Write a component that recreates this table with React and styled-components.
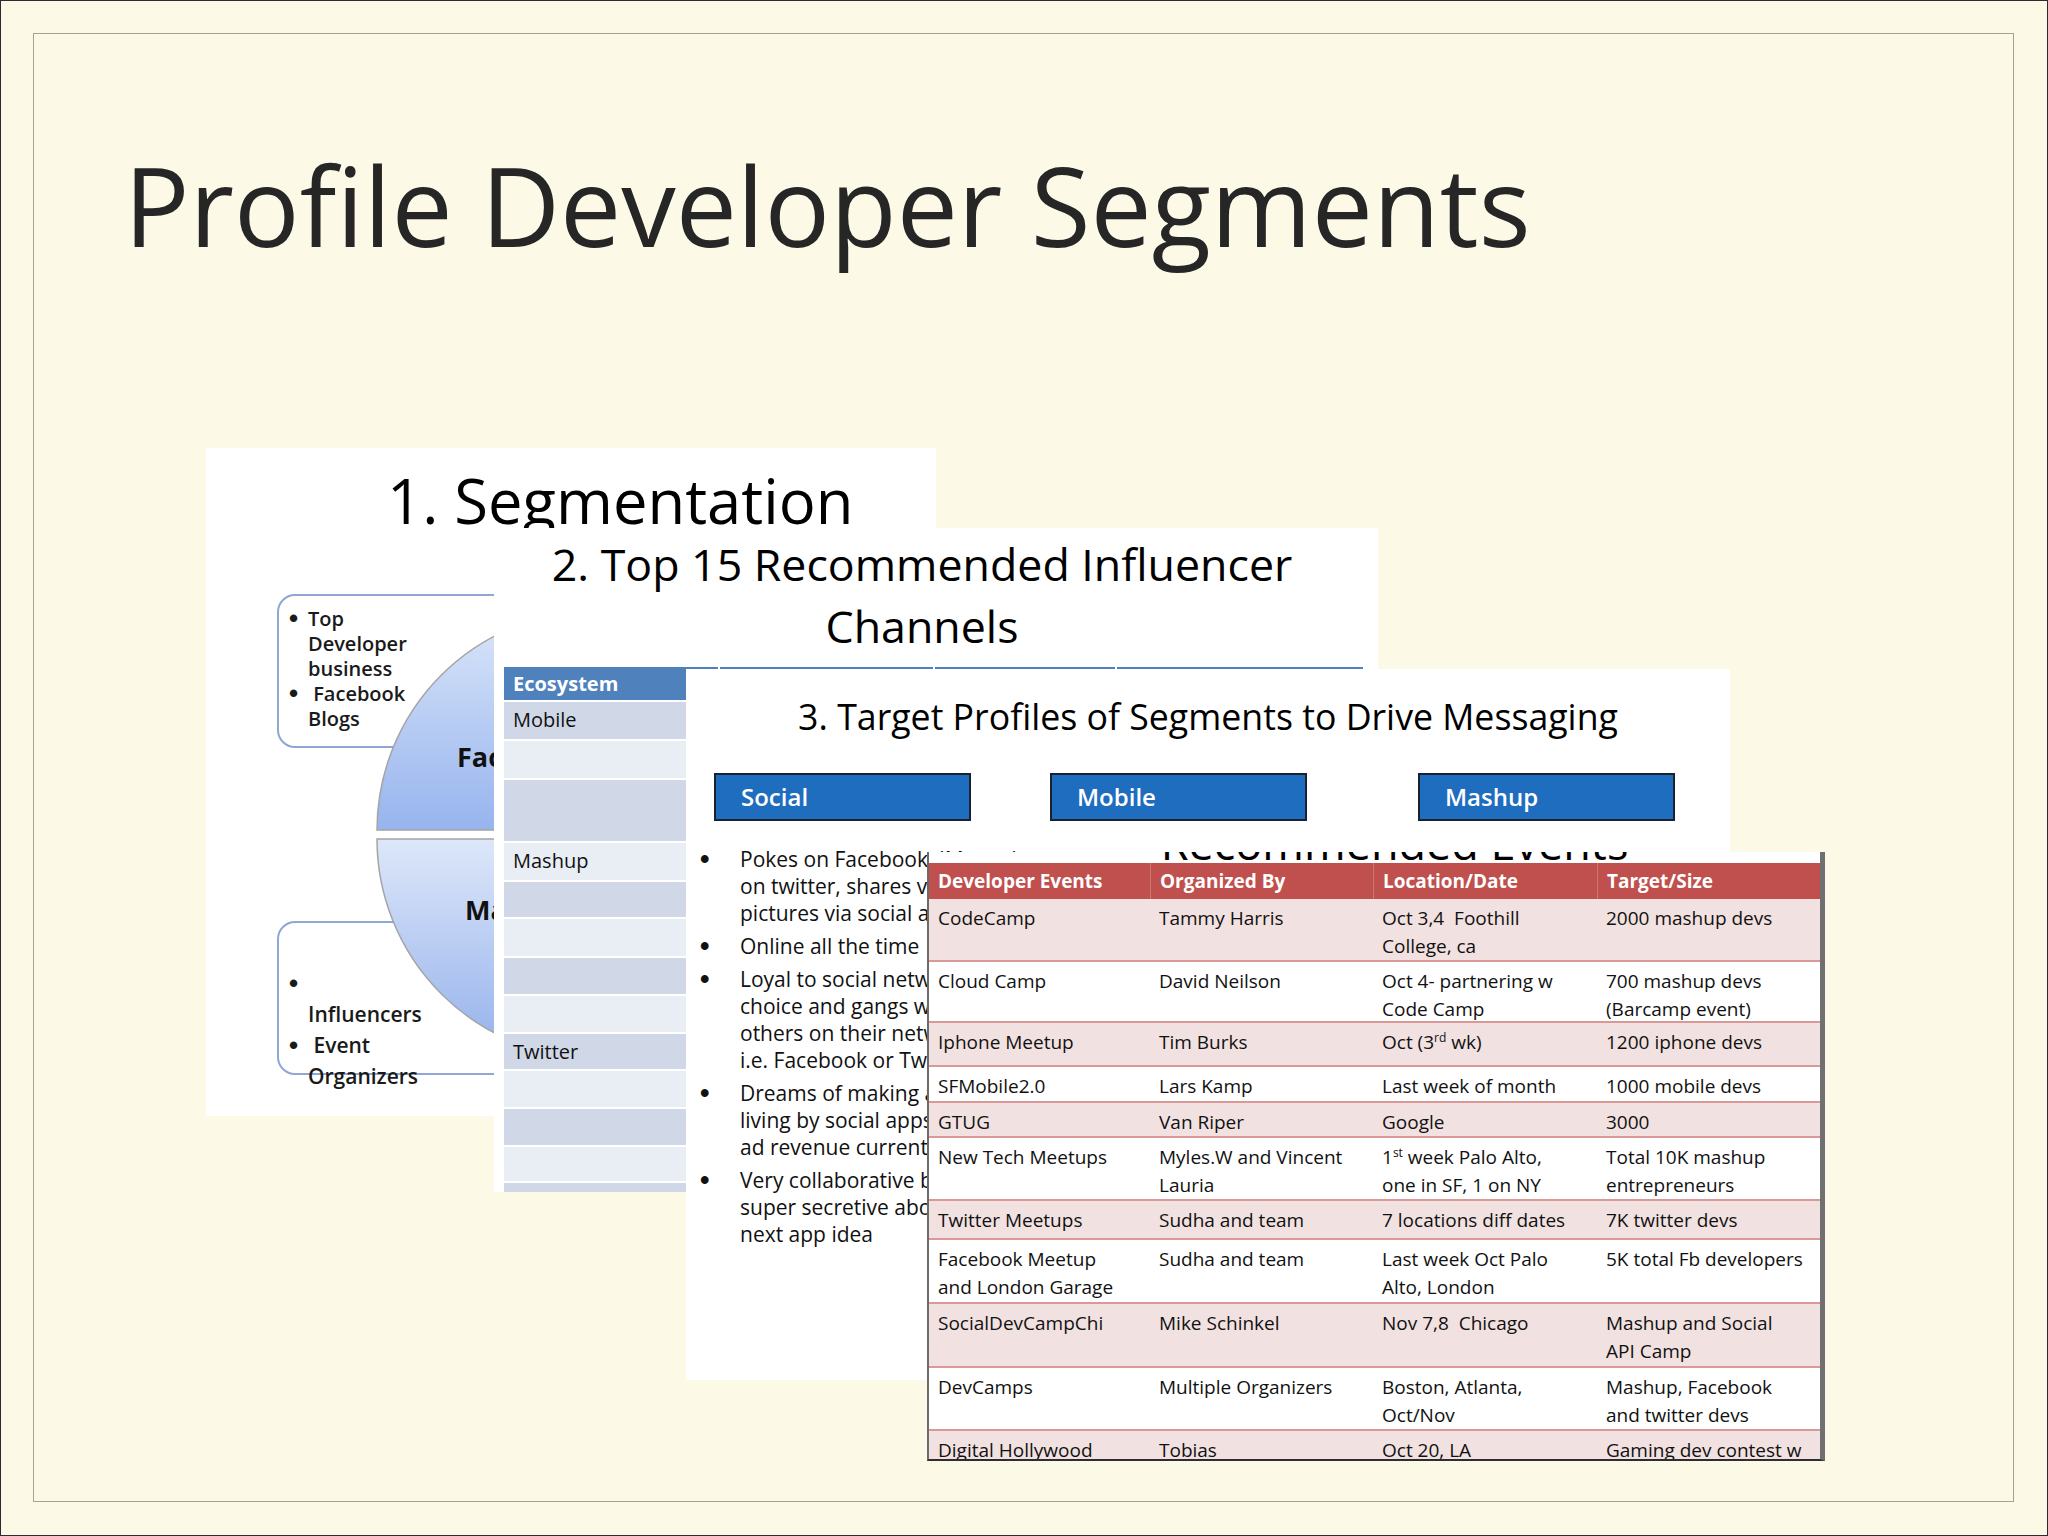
import React from "react";
import styled, { createGlobalStyle } from "styled-components";

const GlobalStyle = createGlobalStyle`
  html, body {
    margin: 0;
    padding: 0;
    background: #fdf9e7;
  }
  body {
    font-family: "Open Sans", "Liberation Sans", sans-serif;
    color: #111;
  }
`;

const Page = styled.div`
  width: 2048px;
  height: 1536px;
  box-sizing: border-box;
  border: 1px solid #2b2b2b;
  background: #fdf9e7;
  padding: 32px 33px 33px 32px;
  overflow: hidden;
`;

const Frame = styled.div`
  height: 100%;
  box-sizing: border-box;
  border: 1px solid #a6a28d;
  display: flex;
  flex-direction: column;
`;

const Title = styled.h1`
  margin: 0;
  padding: 106px 0 0 90px;
  font-family: "Open Sans", sans-serif;
  font-weight: 400;
  font-size: 109px;
  line-height: 130px;
  color: #262626;
  white-space: nowrap;
`;

const Collage = styled.div`
  position: relative;
  flex: 1;
`;

const Shot = styled.div`
  position: absolute;
  left: ${(p) => p.$x}px;
  top: ${(p) => p.$y}px;
  width: ${(p) => p.$w}px;
  height: ${(p) => p.$h}px;
  box-sizing: border-box;
  background: #fff;
  overflow: hidden;
`;

/* ---------- 1. Segmentation ---------- */

const SegTitle = styled.div`
  margin-top: 16px;
  padding-left: 181px;
  font-size: 61.5px;
  line-height: 73px;
  color: #000;
  white-space: nowrap;
`;

const RoundBox = styled.div`
  position: absolute;
  left: 71px;
  top: ${(p) => p.$top}px;
  width: 560px;
  height: 154px;
  box-sizing: border-box;
  border: 2px solid #8da8d4;
  border-radius: 18px;
  padding-top: ${(p) => p.$pad}px;
  font-weight: 600;
  font-size: ${(p) => p.$size}px;
  line-height: ${(p) => p.$lh}px;
  color: #1a1a1a;
`;

const BoxItem = styled.div`
  display: flex;
  padding-left: 10px;
  white-space: nowrap;
`;

const BoxDot = styled.span`
  width: 19px;
  flex: none;
  font-family: "Liberation Sans", sans-serif;
  font-weight: 700;
  font-size: 26px;
`;

const Pie = styled.svg`
  position: absolute;
  left: 160px;
  top: 157px;
  overflow: visible;
`;

const PieLabel = styled.span`
  position: absolute;
  left: ${(p) => p.$x}px;
  top: ${(p) => p.$y}px;
  font-weight: 700;
  font-size: 27px;
  line-height: 34px;
  color: #111;
  white-space: nowrap;
`;

/* ---------- 2. Influencer channels ---------- */

const ChanTitle = styled.div`
  padding: 5px 28px 0 0;
  text-align: center;
  font-size: 44.7px;
  line-height: 62px;
  color: #000;
  white-space: nowrap;
`;

const ChanTable = styled.div`
  margin: 10px 0 0 10px;
  width: 861px;
`;

const ChanRow = styled.div`
  display: grid;
  grid-template-columns: 216px 215px 182px 248px;
  height: ${(p) => p.$h}px;
  box-sizing: border-box;
  border-bottom: 2px solid #fff;
`;

const ChanCell = styled.div`
  background: ${(p) =>
    p.$tone === "head" ? "#4f81bd" : p.$tone === "dark" ? "#d0d8e8" : "#e9edf4"};
  border-right: 2px solid #fff;
  padding-left: 9px;
  display: flex;
  align-items: ${(p) => (p.$tone === "head" ? "center" : "flex-start")};
  padding-top: ${(p) => (p.$tone === "head" ? 0 : 4)}px;
  font-size: 20px;
  line-height: 28px;
  font-weight: ${(p) => (p.$tone === "head" ? 700 : 400)};
  color: ${(p) => (p.$tone === "head" ? "#fff" : "#111")};
  white-space: nowrap;
`;

/* ---------- 3. Target profiles ---------- */

const ProfTitle = styled.div`
  margin-top: 26px;
  text-align: center;
  font-size: 35.7px;
  line-height: 42px;
  color: #000;
  white-space: nowrap;
`;

const SegButtons = styled.div`
  display: flex;
  margin-top: 36px;
`;

const SegButton = styled.div`
  margin-left: ${(p) => p.$ml}px;
  width: 257px;
  height: 48px;
  box-sizing: border-box;
  background: #1f6dbf;
  border: 2px solid #1a2130;
  padding-left: 25px;
  font-weight: 600;
  font-size: 24px;
  line-height: 43px;
  color: #fff;
`;

const Bullets = styled.ul`
  list-style: none;
  margin: 25px 0 0;
  padding: 0 0 0 14px;
  font-size: 21px;
  line-height: 27px;
  color: #111;
`;

const BulletItem = styled.li`
  display: flex;
  margin-bottom: 6px;
  white-space: nowrap;
`;

const BulletDot = styled.span`
  width: 40px;
  flex: none;
  font-family: "Liberation Sans", sans-serif;
  font-weight: 700;
  font-size: 27px;
`;

/* ---------- 4. Recommended events ---------- */

const EventsShot = styled(Shot)`
  border-left: 2px solid #6b6b6b;
  border-right: 5px solid #707070;
  border-bottom: 2px solid #2e2e2e;
`;

const CutTitle = styled.div`
  height: 11px;
  overflow: hidden;
`;

const CutTitleText = styled.div`
  margin-top: -32px;
  padding-left: 40px;
  text-align: center;
  font-size: 45px;
  line-height: 46px;
  color: #000;
  white-space: nowrap;
`;

const EventRow = styled.div`
  display: grid;
  grid-template-columns: 221px 223px 224px 223px;
  height: ${(p) => p.$h}px;
  box-sizing: border-box;
  background: ${(p) => (p.$head ? "#c0504d" : p.$pink ? "#f2e1e1" : "#fff")};
  border-bottom: ${(p) => (p.$head ? "0" : "2px solid #da9896")};
`;

const EventCell = styled.div`
  padding: ${(p) => (p.$head ? "4px 0 0 9px" : "5px 0 0 9px")};
  font-size: 19px;
  line-height: 28px;
  font-weight: ${(p) => (p.$head ? 700 : 400)};
  color: ${(p) => (p.$head ? "#fff" : "#111")};
  white-space: nowrap;
  overflow: hidden;
  border-left: ${(p) => (p.$head && p.$sep ? "1px solid rgba(255,255,255,0.22)" : "0")};

  sup {
    font-size: 12px;
    line-height: 0;
    vertical-align: 7px;
  }
`;

const chanRows = [
  { h: 39, tone: "dark", label: "Mobile" },
  { h: 39, tone: "light", label: "" },
  { h: 63, tone: "dark", label: "" },
  { h: 39, tone: "light", label: "Mashup" },
  { h: 37, tone: "dark", label: "" },
  { h: 39, tone: "light", label: "" },
  { h: 38, tone: "dark", label: "" },
  { h: 38, tone: "light", label: "" },
  { h: 37, tone: "dark", label: "Twitter" },
  { h: 38, tone: "light", label: "" },
  { h: 38, tone: "dark", label: "" },
  { h: 36, tone: "light", label: "" },
  { h: 40, tone: "dark", label: "" },
];

const profileBullets = [
  ["Pokes on Facebook, IMs and tweets", "on twitter, shares videos and", "pictures via social apps"],
  ["Online all the time"],
  ["Loyal to social network of", "choice and gangs with", "others on their network", "i.e. Facebook or Twitter"],
  ["Dreams of making a", "living by social apps", "ad revenue currently"],
  ["Very collaborative but", "super secretive about", "next app idea"],
];

const events = [
  { h: 63, c: [["CodeCamp"], ["Tammy Harris"], ["Oct 3,4\u00a0 Foothill", "College, ca"], ["2000 mashup devs"]] },
  { h: 61, c: [["Cloud Camp"], ["David Neilson"], ["Oct 4- partnering w", "Code Camp"], ["700 mashup devs", "(Barcamp event)"]] },
  { h: 44, c: [["Iphone Meetup"], ["Tim Burks"], [<>Oct (3<sup>rd</sup> wk)</>], ["1200 iphone devs"]] },
  { h: 36, c: [["SFMobile2.0"], ["Lars Kamp"], ["Last week of month"], ["1000 mobile devs"]] },
  { h: 35, c: [["GTUG"], ["Van Riper"], ["Google"], ["3000"]] },
  { h: 63, c: [["New Tech Meetups"], ["Myles.W and Vincent", "Lauria"], [<>1<sup>st</sup> week Palo Alto,</>, "one in SF, 1 on NY"], ["Total 10K mashup", "entrepreneurs"]] },
  { h: 39, c: [["Twitter Meetups"], ["Sudha and team"], ["7 locations diff dates"], ["7K twitter devs"]] },
  { h: 64, c: [["Facebook Meetup", "and London Garage"], ["Sudha and team"], ["Last week Oct Palo", "Alto, London"], ["5K total Fb developers"]] },
  { h: 64, c: [["SocialDevCampChi"], ["Mike Schinkel"], ["Nov 7,8\u00a0 Chicago"], ["Mashup and Social", "API Camp"]] },
  { h: 63, c: [["DevCamps"], ["Multiple Organizers"], ["Boston, Atlanta,", "Oct/Nov"], ["Mashup, Facebook", "and twitter devs"]] },
  { h: 40, c: [["Digital Hollywood"], ["Tobias"], ["Oct 20, LA"], ["Gaming dev contest w"]] },
];

const Lines = ({ lines }) =>
  lines.map((line, i) => (
    <React.Fragment key={i}>
      {i > 0 && <br />}
      {line}
    </React.Fragment>
  ));

function App() {
  return (
    <>
      <GlobalStyle />
      <Page>
        <Frame>
          <Title>Profile Developer Segments</Title>

          <Collage>
            {/* 1. Segmentation */}
            <Shot $x={172} $y={178} $w={730} $h={668}>
              <SegTitle>1. Segmentation</SegTitle>

              <RoundBox $top={146} $pad={10} $size={20} $lh={25}>
                <BoxItem>
                  <BoxDot>•</BoxDot>
                  <span>Top<br />Developer<br />business</span>
                </BoxItem>
                <BoxItem>
                  <BoxDot>•</BoxDot>
                  <span>{"\u00a0"}Facebook<br />Blogs</span>
                </BoxItem>
              </RoundBox>

              <RoundBox $top={473} $pad={45} $size={21} $lh={31}>
                <BoxItem>
                  <BoxDot>•</BoxDot>
                  <span>{"\u00a0"}<br />Influencers</span>
                </BoxItem>
                <BoxItem>
                  <BoxDot>•</BoxDot>
                  <span>{"\u00a0"}Event<br />Organizers</span>
                </BoxItem>
              </RoundBox>

              <Pie width="460" height="460" viewBox="0 0 460 460">
                <defs>
                  <linearGradient id="pieTop" x1="0" y1="0" x2="0" y2="1">
                    <stop offset="0" stopColor="#dbe6f9" />
                    <stop offset="1" stopColor="#96b4ee" />
                  </linearGradient>
                  <linearGradient id="pieBottom" x1="0" y1="0" x2="0" y2="1">
                    <stop offset="0" stopColor="#dde7f9" />
                    <stop offset="1" stopColor="#93b1ec" />
                  </linearGradient>
                </defs>
                <path d="M 11 225 A 219 219 0 0 1 449 225 Z" fill="url(#pieTop)" stroke="#a4a4a4" strokeWidth="1.5" />
                <path d="M 11 234 A 219 219 0 0 0 449 234 Z" fill="url(#pieBottom)" stroke="#a4a4a4" strokeWidth="1.5" />
              </Pie>
              <PieLabel $x={251} $y={292}>Facebook</PieLabel>
              <PieLabel $x={259} $y={445}>Mashup</PieLabel>
            </Shot>

            {/* 2. Influencer channels */}
            <Shot $x={460} $y={258} $w={884} $h={664}>
              <ChanTitle>
                2. Top 15 Recommended Influencer
                <br />
                Channels
              </ChanTitle>
              <ChanTable>
                <ChanRow $h={35}>
                  <ChanCell $tone="head">Ecosystem</ChanCell>
                  <ChanCell $tone="head">Channel</ChanCell>
                  <ChanCell $tone="head">Reach</ChanCell>
                  <ChanCell $tone="head">Notes</ChanCell>
                </ChanRow>
                {chanRows.map((r, i) => (
                  <ChanRow key={i} $h={r.h}>
                    <ChanCell $tone={r.tone}>{r.label}</ChanCell>
                    <ChanCell $tone={r.tone} />
                    <ChanCell $tone={r.tone} />
                    <ChanCell $tone={r.tone} />
                  </ChanRow>
                ))}
              </ChanTable>
            </Shot>

            {/* 3. Target profiles */}
            <Shot $x={652} $y={399} $w={1044} $h={711}>
              <ProfTitle>3. Target Profiles of Segments to Drive Messaging</ProfTitle>
              <SegButtons>
                <SegButton $ml={28}>Social</SegButton>
                <SegButton $ml={79}>Mobile</SegButton>
                <SegButton $ml={111}>Mashup</SegButton>
              </SegButtons>
              <Bullets>
                {profileBullets.map((lines, i) => (
                  <BulletItem key={i}>
                    <BulletDot>•</BulletDot>
                    <span><Lines lines={lines} /></span>
                  </BulletItem>
                ))}
              </Bullets>
            </Shot>

            {/* 4. Recommended events */}
            <EventsShot $x={893} $y={582} $w={898} $h={609}>
              <CutTitle>
                <CutTitleText>Recommended Events</CutTitleText>
              </CutTitle>
              <EventRow $head $h={36}>
                <EventCell $head>Developer Events</EventCell>
                <EventCell $head $sep>Organized By</EventCell>
                <EventCell $head $sep>Location/Date</EventCell>
                <EventCell $head $sep>Target/Size</EventCell>
              </EventRow>
              {events.map((row, i) => (
                <EventRow key={i} $h={row.h} $pink={i % 2 === 0}>
                  {row.c.map((cell, j) => (
                    <EventCell key={j}>
                      <Lines lines={cell} />
                    </EventCell>
                  ))}
                </EventRow>
              ))}
            </EventsShot>
          </Collage>
        </Frame>
      </Page>
    </>
  );
}

export default App;
